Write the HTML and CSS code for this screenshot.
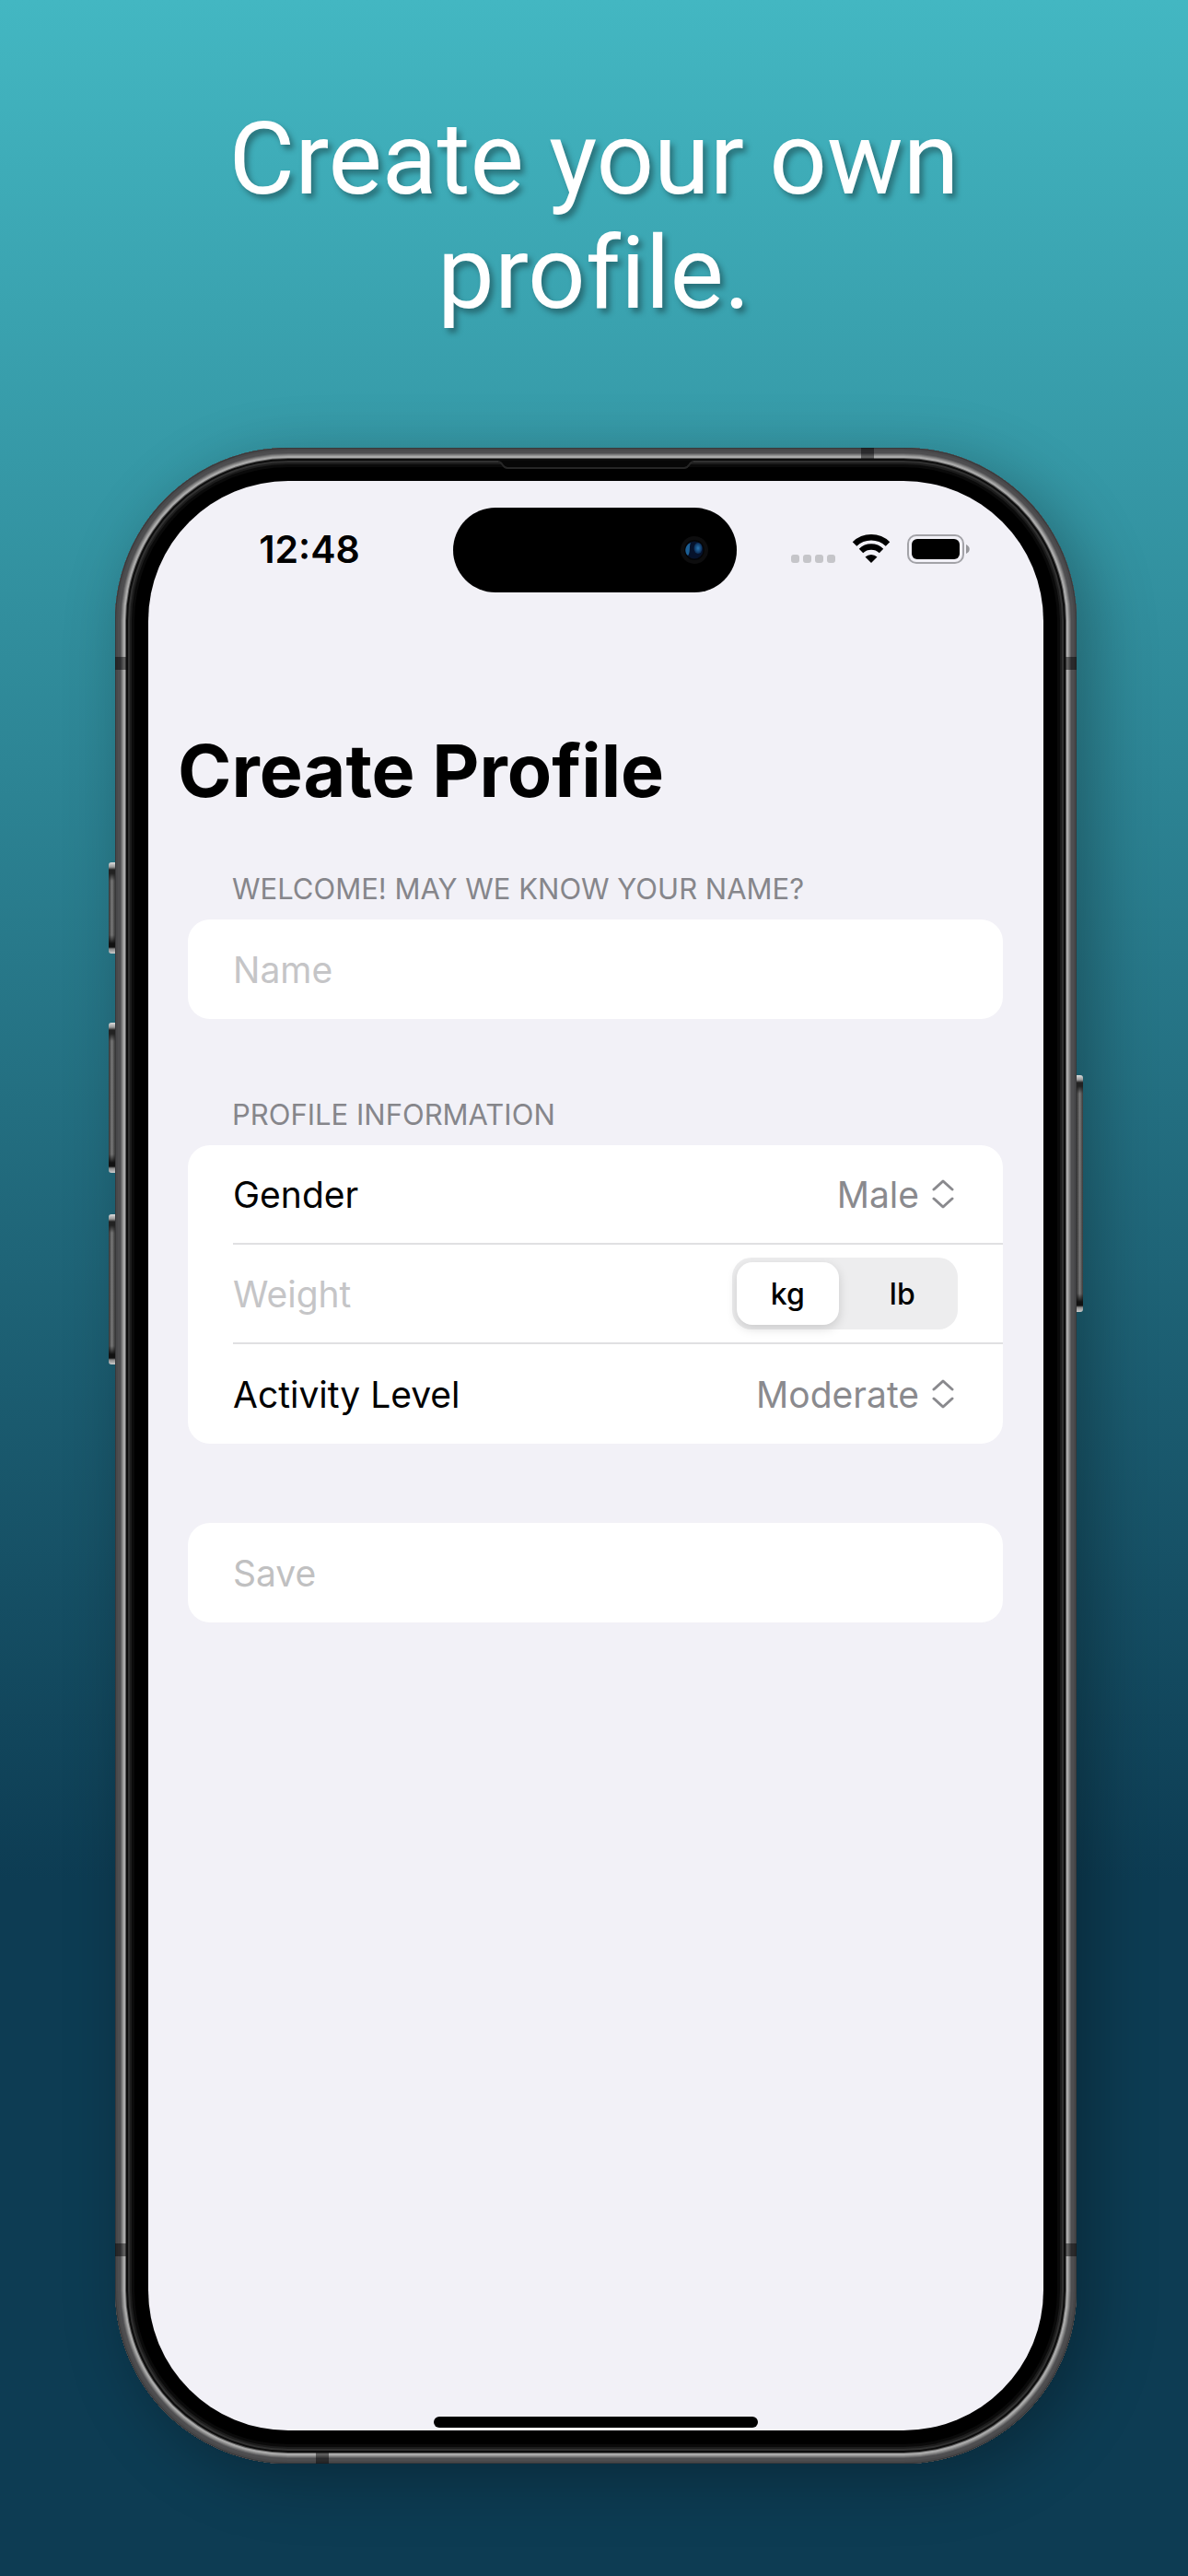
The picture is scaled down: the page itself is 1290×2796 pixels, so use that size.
FILE: index.html
```html
<!DOCTYPE html>
<html lang="en">
    <head>
        <meta charset="UTF-8" />
        <meta name="viewport" content="width=device-width, initial-scale=1" />
        <title>Create your own profile</title>
        <link rel="stylesheet" href="styles.css">
    </head>

    <body>
        <h1 class="headline">Create your own profile.</h1>

        <div class="phone">
            <!-- Side buttons and antenna bands -->
            <span class="side-button action-button"></span>
            <span class="side-button volume-up"></span>
            <span class="side-button volume-down"></span>
            <span class="side-button power-button"></span>
            <span class="band band-left band-upper"></span>
            <span class="band band-right band-upper"></span>
            <span class="band band-left band-lower"></span>
            <span class="band band-right band-lower"></span>
            <span class="band band-top"></span>
            <span class="band band-bottom"></span>
            <svg class="earpiece" viewBox="0 0 212 10">
                <path d="M0 1 C5 1 4 8 10 8 H202 C208 8 207 1 212 1 V0 H0 Z" fill="#070707" />
                <path d="M0 1 C5 1 4 8 10 8 H202 C208 8 207 1 212 1" fill="none" stroke="#262626" stroke-width="2" />
            </svg>

            <div class="screen">
                <div class="status-bar">
                    <span class="time">12:48</span>
                    <div class="island">
                        <svg class="camera" width="32" height="32" viewBox="0 0 32 32">
                            <defs>
                                <radialGradient id="glint">
                                    <stop offset="0" stop-color="#2a78b4" />
                                    <stop offset="1" stop-color="#0b2c55" />
                                </radialGradient>
                            </defs>
                            <circle cx="16" cy="16" r="15" fill="#0d0d0e" />
                            <circle cx="16" cy="16" r="11" fill="#050506" />
                            <circle cx="16" cy="16" r="9.5" fill="#06122b" />
                            <path d="M12 8 C5 11 5 19 9 22 C12 19 10 12 12 8Z" fill="#1c5f94" />
                            <ellipse cx="20" cy="14" rx="4.5" ry="6" fill="url(#glint)" />
                        </svg>
                    </div>
                    <div class="status-icons">
                        <svg width="48" height="32" viewBox="0 0 48 32" fill="#c5c5c9">
                            <rect x="0" y="22" width="9" height="9" rx="3" />
                            <rect x="13" y="22" width="9" height="9" rx="3" />
                            <rect x="26" y="22" width="9" height="9" rx="3" />
                            <rect x="39" y="22" width="9" height="9" rx="3" />
                        </svg>
                        <svg width="42" height="32" viewBox="0 0 42 32">
                            <path d="M3 10.500 A26 26 0 0 1 39 10.500" fill="none" stroke="#000" stroke-width="6.500" />
                            <path d="M10 18 A16 16 0 0 1 32 18" fill="none" stroke="#000" stroke-width="6.500" />
                            <path d="M21 31 L14.500 24.500 A9.500 9.500 0 0 1 27.500 24.500 Z" fill="#000" />
                        </svg>
                        <svg width="68" height="32" viewBox="0 0 68 32">
                            <rect x="1" y="1" width="60" height="30" rx="9" fill="none" stroke="#a3a3a8" stroke-width="2" />
                            <rect x="5" y="5" width="52" height="22" rx="6" fill="#000" />
                            <path d="M64 11 C69 13 69 19 64 21 Z" fill="#98989c" />
                        </svg>
                    </div>
                </div>

                <form class="profile-form">
                    <h2 class="form-title">Create Profile</h2>

                    <section class="section">
                        <label class="section-label" for="name">WELCOME! MAY WE KNOW YOUR NAME?</label>
                        <div class="card">
                            <div class="row">
                                <input class="text-input" type="text" id="name" placeholder="Name" />
                            </div>
                        </div>
                    </section>

                    <section class="section">
                        <h3 class="section-label">PROFILE INFORMATION</h3>
                        <div class="card">
                            <div class="row">
                                <label for="gender">Gender</label>
                                <div class="picker">
                                    <select id="gender">
                                        <option>Male</option>
                                        <option>Female</option>
                                    </select>
                                    <svg class="chevrons" width="24" height="34" viewBox="0 0 24 34">
                                        <path d="M2 12 L12 3 L22 12 M2 22 L12 31 L22 22" />
                                    </svg>
                                </div>
                            </div>
                            <div class="row">
                                <input class="text-input" type="text" id="weight" placeholder="Weight" aria-label="Weight" />
                                <div class="segmented" role="radiogroup" aria-label="Unit">
                                    <label class="segment">
                                        <input type="radio" name="unit" value="kg" checked />
                                        <span>kg</span>
                                    </label>
                                    <label class="segment">
                                        <input type="radio" name="unit" value="lb" />
                                        <span>lb</span>
                                    </label>
                                </div>
                            </div>
                            <div class="row">
                                <label for="activity">Activity Level</label>
                                <div class="picker">
                                    <select id="activity">
                                        <option>Low</option>
                                        <option selected>Moderate</option>
                                        <option>High</option>
                                    </select>
                                    <svg class="chevrons" width="24" height="34" viewBox="0 0 24 34">
                                        <path d="M2 12 L12 3 L22 12 M2 22 L12 31 L22 22" />
                                    </svg>
                                </div>
                            </div>
                        </div>
                    </section>

                    <section class="section">
                        <div class="card">
                            <button class="save-button" type="submit" disabled>Save</button>
                        </div>
                    </section>
                </form>

                <div class="home-indicator"></div>
            </div>
        </div>
    </body>
</html>
```

FILE: styles.css
```css
* {
    margin: 0;
    padding: 0;
    box-sizing: border-box;
}

body {
    display: flex;
    flex-direction: column;
    min-height: 100vh;
    padding: 111px 0 122px;
    background: linear-gradient(#43b7c2, #0d3c53 73%);
    font-family: Inter, "Liberation Sans", sans-serif;
    color: #000;
}

.headline {
    max-width: 900px;
    margin: 0 auto 127px;
    font-family: Roboto, "Liberation Sans", sans-serif;
    font-size: 110px;
    font-weight: 400;
    line-height: 124px;
    font-variant-ligatures: none;
    text-align: center;
    color: white;
    text-shadow: 4px 5px 6px rgba(0, 0, 0, 0.35);
}

/* Device frame: metal edge on the outside, black bezel on the inside */
.phone {
    position: relative;
    flex: 1;
    display: flex;
    margin: 0 121px 0 125px;
    padding: 36px;
    border-radius: 188px;
    background: #000;
    box-shadow:
        inset 0 0 0 1px #38383a,
        inset 0 0 0 3px #48484a,
        inset 0 0 0 6px #4e4e50,
        inset 0 0 0 7px #626264,
        inset 0 0 0 8px #7c7c7c,
        inset 0 0 0 9px #929292,
        inset 0 0 0 11px #aaa,
        inset 0 0 0 12px #5a5a5a,
        inset 0 0 0 14px #0c0c0c,
        inset 0 0 0 16px #303030,
        inset 0 0 0 18px #1c1c1c,
        inset 0 0 0 21px #0a0a0a,
        16px 16px 70px rgba(0, 0, 0, 0.3);
}

.screen {
    flex: 1;
    min-width: 0;
    display: flex;
    flex-direction: column;
    border-radius: 152px;
    background: #f2f1f7;
}

.side-button {
    position: absolute;
    left: -7px;
    width: 7px;
    height: 163px;
    border-radius: 3px 0 0 3px;
    background:
        linear-gradient(#ddd, #999 5px, #222 8px, #222 12px, transparent 20px),
        linear-gradient(to top, #ccc, #888 5px, #111 7px, #111 11px, transparent 20px),
        linear-gradient(to right, #333, #777 50%, #3a3a3a);
}

.action-button {
    top: 450px;
    height: 99px;
}

.volume-up {
    top: 624px;
}

.volume-down {
    top: 832px;
}

.power-button {
    top: 681px;
    left: auto;
    right: -7px;
    height: 257px;
    border-radius: 0 3px 3px 0;
}

.band {
    position: absolute;
    width: 12px;
    height: 14px;
    background: rgba(0, 0, 0, 0.45);
}

.band-left {
    left: 0;
}

.band-right {
    right: 0;
}

.band-upper {
    top: 227px;
}

.band-lower {
    bottom: 225px;
}

.band-top,
.band-bottom {
    width: 14px;
    height: 12px;
}

.band-top {
    top: 0;
    right: 220px;
}

.band-bottom {
    bottom: 0;
    left: 218px;
}

.earpiece {
    position: absolute;
    top: 14px;
    left: 50%;
    width: 212px;
    height: 10px;
    transform: translateX(-50%);
}

.status-bar {
    display: grid;
    grid-template-columns: 1fr 308px 1fr;
    align-items: center;
    justify-items: center;
    padding: 29px 21px 0 19px;
}

.time {
    padding-bottom: 3px;
    font-size: 41px;
    font-weight: 600;
}

.island {
    display: flex;
    align-items: center;
    justify-content: flex-end;
    width: 100%;
    height: 92px;
    padding-right: 30px;
    border-radius: 46px;
    background: #000;
}

.status-icons {
    display: flex;
    gap: 18px;
    padding-bottom: 3px;
}

.profile-form {
    flex: 1;
    padding: 145px 44px 80px 43px;
}

.form-title {
    margin: 0 -11px 63px;
    font-size: 79px;
    font-weight: 700;
    line-height: 96px;
}

.section {
    margin-bottom: 86px;
}

.section-label {
    display: block;
    margin: 0 48px 15px;
    font-size: 31px;
    font-weight: 400;
    line-height: 36px;
    color: #86868b;
}

.card {
    border-radius: 24px;
    background: white;
    font-size: 39px;
}

.row {
    display: flex;
    align-items: center;
    height: 108px;
    margin-left: 49px;
    padding-right: 49px;
}

.row:not(:last-child) {
    border-bottom: 2px solid #e0e0e2;
}

.text-input,
.picker select,
.save-button {
    border: none;
    outline: none;
    background: none;
    font: inherit;
}

.text-input {
    flex: 1;
    min-width: 0;
}

.text-input::placeholder {
    color: #c5c5c7;
}

.picker {
    display: flex;
    align-items: center;
    gap: 14px;
    margin-left: auto;
    padding-right: 4px;
}

.picker select {
    appearance: none;
    color: #8a8a8e;
    text-align-last: right;
}

.chevrons {
    fill: none;
    stroke: #8a8a8e;
    stroke-width: 3;
    stroke-linecap: round;
    stroke-linejoin: round;
}

.segmented {
    display: flex;
    gap: 14px;
    width: 245px;
    height: 78px;
    padding: 5px;
    border-radius: 21px;
    background: #ededee;
    font-size: 32px;
    font-weight: 500;
}

.segment {
    flex: 1;
    display: flex;
}

.segment input {
    appearance: none;
}

.segment span {
    flex: 1;
    display: flex;
    align-items: center;
    justify-content: center;
    border-radius: 17px;
}

.segment input:checked + span {
    background: white;
    box-shadow: 0 4px 12px rgba(0, 0, 0, 0.15);
}

.save-button {
    width: 100%;
    height: 108px;
    padding: 0 49px;
    text-align: left;
    color: #c0c0c1;
}

.home-indicator {
    width: 352px;
    height: 12px;
    margin: 0 auto 3px;
    border-radius: 6px;
    background: #000;
}
```
